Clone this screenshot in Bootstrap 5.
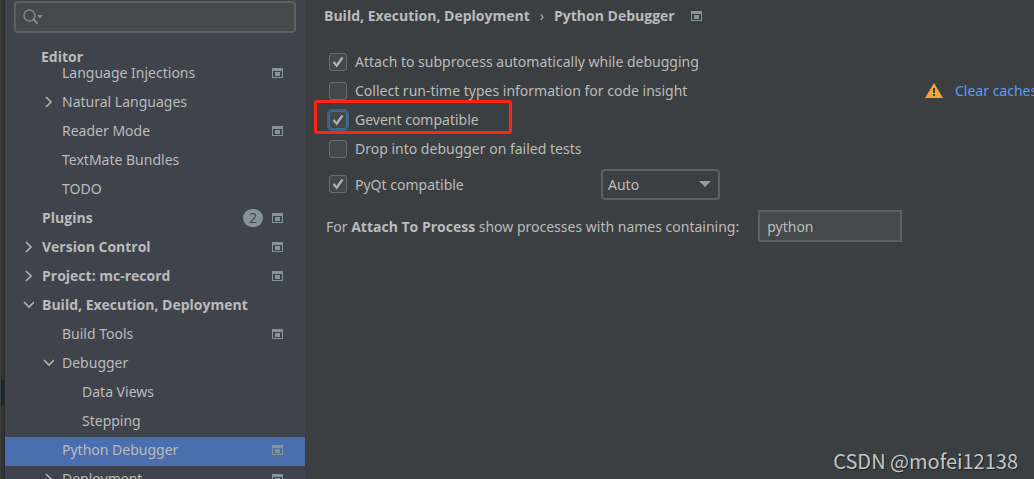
<!DOCTYPE html>
<html lang="en">
<head>
<meta charset="utf-8">
<meta name="viewport" content="width=device-width, initial-scale=1">
<title>Settings - Python Debugger</title>
<link href="https://cdn.jsdelivr.net/npm/bootstrap@5.3.0/dist/css/bootstrap.min.css" rel="stylesheet">
<style>
  body { background: #3c3f41; color: #bbbbbb; font: 14px/21px "Noto Sans", "Open Sans", sans-serif; }
  strong, .tree-top, .crumbs { font-family: "Open Sans", "Noto Sans", sans-serif; font-weight: 700; }

  /* Window edge */
  .edge { width: 5px; background: #313335; border-left: 1px solid #3a3c3e; border-right: 1px solid #2b2b2b; padding-top: 380px; }
  .edge-mark { height: 25px; background: #0d293e; }

  /* Sidebar */
  .sidebar { width: 300px; background: #3f434c; }
  .search { margin: 1px 9px 0 9px; height: 32px; padding: 0 7px; background: #45494a; border: 2px solid #5e6060; border-radius: 4px; }
  .search input { background: transparent; color: inherit; outline: 0; min-width: 0; }
  .tree-head { margin-top: 13px; padding-left: 36px; }
  .tree-list { margin-top: -7px; }
  .tree-row { height: 29px; padding: 0 22px 4px 17px; color: #bbbbbb; text-decoration: none; white-space: nowrap; }
  .lvl-1 { padding-left: 37px; }
  .lvl-2 { padding-left: 57px; }
  .tree-row.selected { background: #4b6eaf; }
  .arrow { width: 12px; height: 12px; margin-right: 8px; flex: none; }
  .count { width: 20px; height: 18px; line-height: 18px; margin-right: 9px; border-radius: 9px; background: #87939a; color: #3f434c; text-align: center; }
  .scope { width: 11px; height: 10px; flex: none; }

  /* Settings page */
  .crumbs { padding: 5px 19px 0; margin-bottom: 21px; }
  .crumbs .breadcrumb { --bs-breadcrumb-item-padding-x: 10px; font-size: 14px; }
  .crumbs .breadcrumb-item, .crumbs .breadcrumb-item + .breadcrumb-item::before { color: #bbbbbb; }
  .crumbs .breadcrumb-item + .breadcrumb-item::before { font-weight: 400; }
  .opt { height: 29px; padding-left: 24px; white-space: nowrap; }
  .opt-tall { height: 42px; }
  .opt-name { padding-left: 21px; }
  .tick { appearance: none; width: 18px; height: 18px; margin: 0 8px 0 0; flex: none; background: #43494a; border: 1px solid #6b6b6b; border-radius: 3px; }
  .tick:checked { background: #43494a url("data:image/svg+xml,%3Csvg xmlns='http://www.w3.org/2000/svg' viewBox='0 0 16 16'%3E%3Cpath d='M3.5 8l3.2 3.7L12.5 3.5' fill='none' stroke='%23b4b4b4' stroke-width='2.2'/%3E%3C/svg%3E") center / 16px no-repeat; }
  .tick.active { outline: 2px solid #3d6185; border-color: #466d94; }
  .callout { left: 9px; top: -5px; width: 198px; height: 34px; border: 3px solid #ff2414; border-radius: 3px; pointer-events: none; }
  .caches { width: 109px; overflow: hidden; }
  .caches a { color: #589df6; text-decoration: none; }
  .mode-label { width: 272px; }
  .mode { width: 119px; height: 31px; padding: 0 5px; color: #bbbbbb; border: 2px solid #5e6060; border-radius: 4px; appearance: none;
    background: #3c3f41 url("data:image/svg+xml,%3Csvg xmlns='http://www.w3.org/2000/svg' viewBox='0 0 12 6'%3E%3Cpath d='M0 0h12L6 6z' fill='%239a9da0'/%3E%3C/svg%3E") right 7px center / 12px 6px no-repeat; }
  .proc { width: 144px; height: 32px; padding: 0 7px; margin-left: 19px; background: #45494a; color: #bbbbbb; border: 2px solid #5e6060; }
  .credit { right: 16px; bottom: 6px; font: 20px/24px "Noto Sans CJK SC", sans-serif; color: #c4c5c6; text-shadow: 1px 1px 1px #222; }
</style>
</head>
<body>
<svg class="d-none">
  <symbol id="i-scope" viewBox="0 0 11 10"><path fill="#87939a" fill-rule="evenodd" d="M0 0h11v10H0zM1 3v6h9V3z"/><path fill="#87939a" d="M3 4h5v4H3z"/></symbol>
  <symbol id="i-right" viewBox="0 0 12 12"><path d="M4 1l5 5-5 5" fill="none" stroke="#adb0b3" stroke-width="1.7"/></symbol>
  <symbol id="i-down" viewBox="0 0 12 12"><path d="M2 3l5 5 5-5" fill="none" stroke="#adb0b3" stroke-width="1.7"/></symbol>
</svg>
<div class="d-flex vh-100 overflow-hidden position-relative">
  <div class="edge flex-shrink-0"><div class="edge-mark"></div></div>

  <aside class="sidebar flex-shrink-0 d-flex flex-column">
    <label class="search d-flex align-items-center flex-shrink-0">
      <svg width="21" height="16" viewBox="0 0 21 16" class="flex-shrink-0"><circle cx="6.5" cy="6.5" r="5.500" fill="none" stroke="#7f8b91" stroke-width="1.4"/><path d="M10.5 10.5l4 4" stroke="#7f8b91" stroke-width="2"/><path d="M14 6h6l-3 3.500z" fill="#7f8b91"/></svg>
      <input type="text" class="border-0 flex-grow-1" aria-label="Search settings">
    </label>
    <div class="tree-head tree-top">Editor</div>
    <nav class="overflow-hidden flex-grow-1">
      <div class="tree-list">
        <a href="#" class="tree-row lvl-1 d-flex align-items-center"><span class="arrow"></span>Language Injections<svg class="scope ms-auto"><use href="#i-scope"/></svg></a>
        <a href="#" class="tree-row lvl-1 d-flex align-items-center"><svg class="arrow"><use href="#i-right"/></svg>Natural Languages</a>
        <a href="#" class="tree-row lvl-1 d-flex align-items-center"><span class="arrow"></span>Reader Mode<svg class="scope ms-auto"><use href="#i-scope"/></svg></a>
        <a href="#" class="tree-row lvl-1 d-flex align-items-center"><span class="arrow"></span>TextMate Bundles</a>
        <a href="#" class="tree-row lvl-1 d-flex align-items-center"><span class="arrow"></span>TODO</a>
        <a href="#" class="tree-row tree-top d-flex align-items-center"><span class="arrow"></span>Plugins<span class="count ms-auto fw-normal">2</span><svg class="scope"><use href="#i-scope"/></svg></a>
        <a href="#" class="tree-row tree-top d-flex align-items-center"><svg class="arrow"><use href="#i-right"/></svg>Version Control<svg class="scope ms-auto"><use href="#i-scope"/></svg></a>
        <a href="#" class="tree-row tree-top d-flex align-items-center"><svg class="arrow"><use href="#i-right"/></svg>Project: mc-record<svg class="scope ms-auto"><use href="#i-scope"/></svg></a>
        <a href="#" class="tree-row tree-top d-flex align-items-center"><svg class="arrow"><use href="#i-down"/></svg>Build, Execution, Deployment</a>
        <a href="#" class="tree-row lvl-1 d-flex align-items-center"><span class="arrow"></span>Build Tools<svg class="scope ms-auto"><use href="#i-scope"/></svg></a>
        <a href="#" class="tree-row lvl-1 d-flex align-items-center"><svg class="arrow"><use href="#i-down"/></svg>Debugger</a>
        <a href="#" class="tree-row lvl-2 d-flex align-items-center"><span class="arrow"></span>Data Views</a>
        <a href="#" class="tree-row lvl-2 d-flex align-items-center"><span class="arrow"></span>Stepping</a>
        <a href="#" class="tree-row lvl-1 selected d-flex align-items-center" aria-current="page"><span class="arrow"></span>Python Debugger<svg class="scope ms-auto"><use href="#i-scope"/></svg></a>
        <a href="#" class="tree-row lvl-1 d-flex align-items-center"><svg class="arrow"><use href="#i-right"/></svg>Deployment<svg class="scope ms-auto"><use href="#i-scope"/></svg></a>
      </div>
    </nav>
  </aside>

  <main class="flex-grow-1 overflow-hidden">
    <div class="crumbs d-flex align-items-center">
      <ol class="breadcrumb mb-0 flex-nowrap text-nowrap" style="--bs-breadcrumb-divider: '›'">
        <li class="breadcrumb-item">Build, Execution, Deployment</li>
        <li class="breadcrumb-item">Python Debugger</li>
      </ol>
      <svg class="scope ms-3"><use href="#i-scope"/></svg>
    </div>
    <div class="opt d-flex align-items-center">
      <input class="tick" type="checkbox" id="attach" checked><label for="attach">Attach to subprocess automatically while debugging</label>
    </div>
    <div class="opt d-flex align-items-center">
      <input class="tick" type="checkbox" id="collect"><label for="collect">Collect run-time types information for code insight</label>
      <div class="caches ms-auto d-flex align-items-center flex-shrink-0">
        <svg width="18" height="15" viewBox="0 0 18 15" class="flex-shrink-0 me-2"><path d="M9 0l9 15H0z" fill="#f0a732"/><path d="M8 5h2v5H8zM8 11h2v2H8z" fill="#3c3f41"/></svg>
        <a href="#" class="ps-1">Clear caches</a>
      </div>
    </div>
    <div class="opt d-flex align-items-center position-relative">
      <input class="tick active" type="checkbox" id="gevent" checked><label for="gevent">Gevent compatible</label>
      <div class="callout position-absolute"></div>
    </div>
    <div class="opt d-flex align-items-center">
      <input class="tick" type="checkbox" id="drop"><label for="drop">Drop into debugger on failed tests</label>
    </div>
    <div class="opt opt-tall d-flex align-items-center">
      <div class="mode-label d-flex align-items-center"><input class="tick" type="checkbox" id="pyqt" checked><label for="pyqt">PyQt compatible</label></div>
      <select class="mode" aria-label="PyQt backend"><option>Auto</option><option>PyQt5</option></select>
    </div>
    <div class="opt opt-tall opt-name d-flex align-items-center">
      <label for="names">For <strong>Attach To Process</strong> show processes with names containing:</label>
      <input class="proc" type="text" id="names" value="python">
    </div>
  </main>
  <div class="credit position-absolute">CSDN @mofei12138</div>
</div>
<script src="https://cdn.jsdelivr.net/npm/bootstrap@5.3.0/dist/js/bootstrap.bundle.min.js"></script>
</body>
</html>
